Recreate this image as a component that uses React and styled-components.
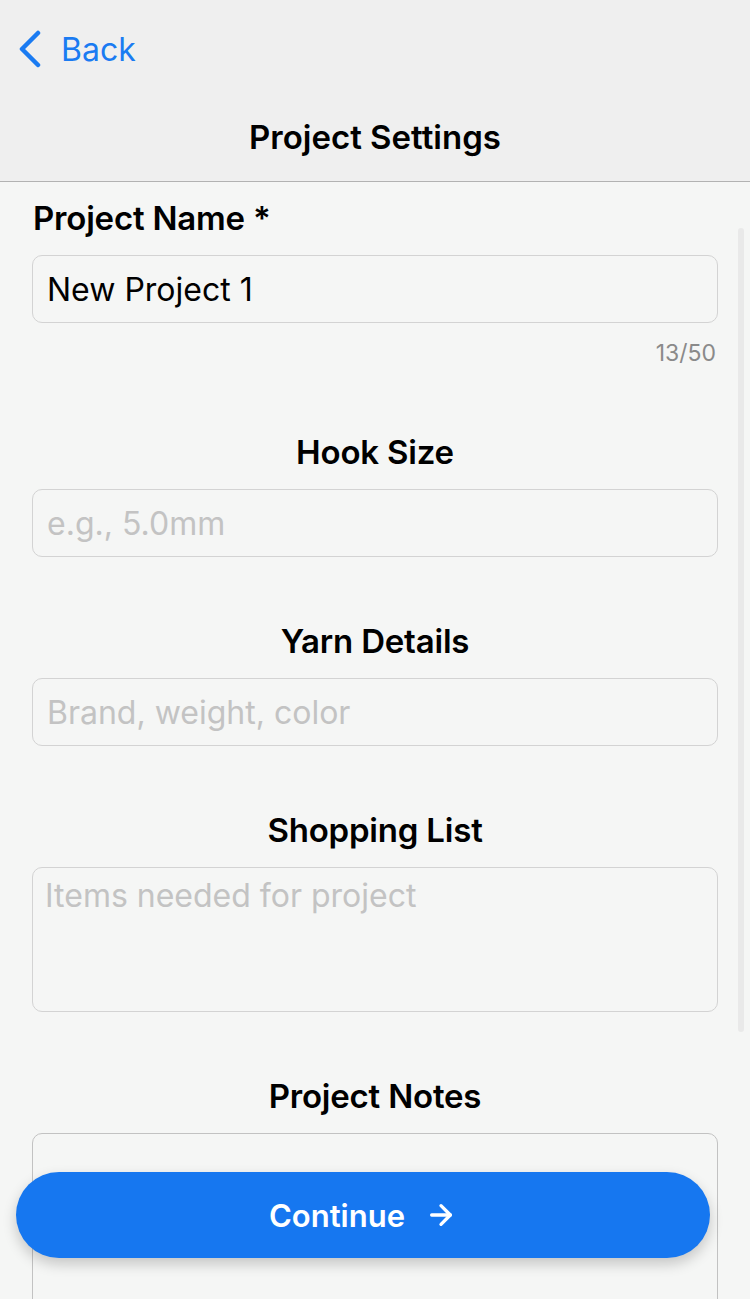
import React, { useState } from 'react';
import styled, { createGlobalStyle } from 'styled-components';
import { ArrowRight } from 'lucide-react';

const GlobalStyle = createGlobalStyle`
	html, body {
		margin: 0;
		padding: 0;
		background: #f5f6f5;
	}
	* {
		box-sizing: border-box;
	}
	body {
		font-family: Inter, "Noto Sans", "Liberation Sans", sans-serif;
		-webkit-font-smoothing: antialiased;
	}
`;

const Screen = styled.div`
	position: relative;
	width: 750px;
	height: 1299px;
	overflow: hidden;
	background: #f5f6f5;
	display: flex;
	flex-flow: column;
`;

const Header = styled.header`
	flex-shrink: 0;
	background: #efefef;
	border-bottom: 1px solid #b2b2b2;
	height: 182px;
	display: flex;
	flex-flow: column;
`;

const NavRow = styled.div`
	height: 98px;
	display: flex;
	align-items: center;
	padding-left: 18px;
`;

const BackButton = styled.button`
	display: flex;
	align-items: center;
	gap: 19px;
	background: transparent;
	border: none;
	padding: 0;
	color: #1a7bf2;
	font-family: inherit;
	font-size: 32px;
	cursor: pointer;
`;

const Title = styled.h1`
	margin: 0;
	height: 78px;
	line-height: 78px;
	text-align: center;
	font-size: 33px;
	font-weight: 600;
	color: #000;
`;

const Content = styled.main`
	flex: 1;
	padding: 16px 32px 0;
	display: flex;
	flex-flow: column;
	gap: 64px;
`;

const Field = styled.div`
	display: flex;
	flex-flow: column;
	gap: 17px;
`;

const Label = styled.label`
	display: block;
	height: 40px;
	line-height: 40px;
	font-size: 33px;
	font-weight: 600;
	letter-spacing: -0.2px;
	color: #000;
	text-align: ${p => (p.$left ? 'left' : 'center')};
	padding-left: ${p => (p.$left ? '1px' : '0')};
`;

const TextInput = styled.input`
	width: 100%;
	height: 68px;
	border: 1.5px solid #d3d3d3;
	border-radius: 10px;
	background: transparent;
	padding: 0 14px;
	font-family: inherit;
	font-size: 32px;
	color: #000;
	outline: none;

	&::placeholder {
		color: #c3c3c3;
	}
`;

const TextArea = styled.textarea`
	display: block;
	width: 100%;
	height: ${p => p.$height}px;
	border: 1.5px solid ${p => p.$border || '#d3d3d3'};
	border-radius: 10px;
	background: transparent;
	padding: 9px 12px;
	font-family: inherit;
	font-size: 32px;
	line-height: 38px;
	color: #000;
	resize: none;
	outline: none;

	&::placeholder {
		color: #c3c3c3;
	}
`;

const Counter = styled.div`
	margin-top: 15px;
	text-align: right;
	padding-right: 2px;
	font-size: 23px;
	line-height: 30px;
	color: #8a8a8a;
`;

const ScrollThumb = styled.div`
	position: absolute;
	right: 6px;
	top: 228px;
	width: 6px;
	height: 804px;
	border-radius: 3px;
	background: #e9e9e9;
`;

const ContinueButton = styled.button`
	position: absolute;
	left: 16px;
	top: 1172px;
	width: 694px;
	height: 86px;
	border: none;
	border-radius: 43px;
	background: #1677f0;
	color: #fff;
	display: flex;
	align-items: center;
	justify-content: center;
	gap: 20px;
	font-family: inherit;
	font-size: 31px;
	font-weight: 600;
	box-shadow: 0 6px 14px rgba(0, 0, 0, 0.2);
	cursor: pointer;
`;

const Chevron = () => (
	<svg width="24" height="38" viewBox="0 0 24 38" fill="none">
		<polyline points="20,3 4,19 20,35" stroke="currentColor" strokeWidth="4.5" strokeLinecap="round" strokeLinejoin="round" />
	</svg>
);

const App = () => {
	const [ name, setName ] = useState('New Project 1');

	return (
		<Screen>
			<GlobalStyle />
			<Header>
				<NavRow>
					<BackButton>
						<Chevron />
						Back
					</BackButton>
				</NavRow>
				<Title>Project Settings</Title>
			</Header>
			<Content>
				<Field>
					<Label $left>Project Name *</Label>
					<div>
						<TextInput value={name} maxLength={50} onChange={e => setName(e.target.value)} />
						<Counter>{name.length}/50</Counter>
					</div>
				</Field>
				<Field>
					<Label>Hook Size</Label>
					<TextInput placeholder="e.g., 5.0mm" />
				</Field>
				<Field>
					<Label>Yarn Details</Label>
					<TextInput placeholder="Brand, weight, color" />
				</Field>
				<Field>
					<Label>Shopping List</Label>
					<TextArea $height={145} placeholder="Items needed for project" />
				</Field>
				<Field>
					<Label>Project Notes</Label>
					<TextArea $height={240} $border="#c2c2c2" />
				</Field>
			</Content>
			<ScrollThumb />
			<ContinueButton>
				Continue
				<ArrowRight size={32} strokeWidth={2.5} />
			</ContinueButton>
		</Screen>
	);
};

export default App;
